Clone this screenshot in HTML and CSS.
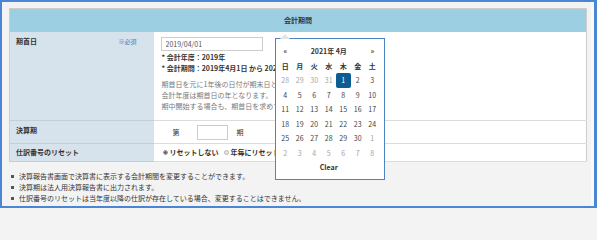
FILE: index.html
```html
<!DOCTYPE html>
<html lang="ja">
<head>
<meta charset="utf-8">
<title>会計期間</title>
<link rel="stylesheet" href="styles.css">
</head>
<body>
<div class="frame">
  <table class="form">
    <thead>
      <tr><th colspan="2" class="head">会計期間</th></tr>
    </thead>
    <tbody>
      <tr class="r1">
        <th class="lab"><div class="labrow"><span>期首日</span><span class="req">※必須</span></div></th>
        <td class="val">
          <input class="date" type="text" value="2019/04/01">
          <div class="info">* 会計年度：2019年</div>
          <div class="info">* 会計期間：2019年4月1日 から 2020年3月31日</div>
          <p class="help">期首日を元に1年後の日付が期末日となります。<br>会計年度は期首日の年となります。<br>期中開始する場合も、期首日を求めて入力してください。</p>
        </td>
      </tr>
      <tr class="r2">
        <th class="lab">決算期</th>
        <td class="val">
          <div class="term"><span>第</span><input class="num" type="text" value=""><span>期</span></div>
        </td>
      </tr>
      <tr class="r3">
        <th class="lab">仕訳番号のリセット</th>
        <td class="val">
          <div class="radios">
            <span class="radio on"></span><span class="rlabel">リセットしない</span>
            <span class="radio"></span><span class="rlabel">年毎にリセットする</span>
          </div>
        </td>
      </tr>
    </tbody>
  </table>
  <ul class="notes">
    <li>決算報告書画面で決算書に表示する会計期間を変更することができます。</li>
    <li>決算期は法人用決算報告書に出力されます。</li>
    <li>仕訳番号のリセットは当年度以降の仕訳が存在している場合、変更することはできません。</li>
  </ul>
</div>

<div class="dp">
  <div class="cal">
    <div class="c b">«</div><div class="title">2021年 4月</div><div class="c b">»</div>
    <div class="c b">日</div><div class="c b">月</div><div class="c b">火</div><div class="c b">水</div><div class="c b">木</div><div class="c b">金</div><div class="c b">土</div>
    <div class="c old">28</div><div class="c old">29</div><div class="c old">30</div><div class="c old">31</div><div class="c active">1</div><div class="c">2</div><div class="c">3</div>
    <div class="c">4</div><div class="c">5</div><div class="c">6</div><div class="c">7</div><div class="c">8</div><div class="c">9</div><div class="c">10</div>
    <div class="c">11</div><div class="c">12</div><div class="c">13</div><div class="c">14</div><div class="c">15</div><div class="c">16</div><div class="c">17</div>
    <div class="c">18</div><div class="c">19</div><div class="c">20</div><div class="c">21</div><div class="c">22</div><div class="c">23</div><div class="c">24</div>
    <div class="c">25</div><div class="c">26</div><div class="c">27</div><div class="c">28</div><div class="c">29</div><div class="c">30</div><div class="c old">1</div>
    <div class="c old">2</div><div class="c old">3</div><div class="c old">4</div><div class="c old">5</div><div class="c old">6</div><div class="c old">7</div><div class="c old">8</div>
    <div class="clear">Clear</div>
  </div>
</div>
</body>
</html>
```

FILE: styles.css
```css
* { box-sizing: border-box; }
html, body { margin: 0; padding: 0; }
body {
  font-family: "Noto Sans CJK JP", "Noto Sans", sans-serif;
  font-size: 7px;
  line-height: 11px;
  color: #333;
  background: #f3f3f3;
  overflow: hidden;
}
.frame {
  width: 597px;
  height: 208px;
  border: solid #4a86d4;
  border-width: 2px 3px 2px 2px;
  background: #f3f3f3;
  box-shadow: inset -3px 0 0 #f9f9f9;
  padding: 6px 7px 0 7px;
}
.form {
  width: 100%;
  border-collapse: collapse;
  border: 1px solid #cdcdcd;
  background: #fff;
}
.head {
  background: #9dcfe3;
  height: 23px;
  padding: 0;
  font-weight: bold;
  text-align: center;
  vertical-align: middle;
}
.lab {
  width: 144px;
  background: #d6e2ec;
  text-align: left;
  vertical-align: top;
  font-weight: bold;
  padding: 4px 17px 3px 6px;
  border-bottom: 1px solid #c3ced8;
}
.labrow { display: flex; justify-content: space-between; align-items: center; }
.req { color: #3a7cc4; font-size: 6px; font-weight: normal; }
.val {
  vertical-align: top;
  padding: 4px 7px 3px;
  border-bottom: 1px solid #dcdcdc;
}
.r1 .val { padding-top: 5px; padding-bottom: 8px; }
.r3 .val, .r3 .lab { padding-top: 3px; }
.date {
  display: block;
  width: 102px;
  height: 14px;
  margin: 0 0 1px 0;
  padding: 0 4px;
  border: 1px solid #cccccc;
  font: 7px "Noto Sans CJK JP", "Noto Sans", sans-serif;
  color: #555;
  background: #fff;
  outline: none;
}
.info { font-weight: bold; padding-left: 1px; }
.help { margin: 5px 0 0; color: #7a7a7a; padding-left: 1px; }
.term { display: flex; align-items: center; padding-left: 12px; height: 15px; }
.num {
  width: 31px;
  height: 15px;
  margin: 0 9px 0 17px;
  border: 1px solid #cccccc;
  background: #fff;
  padding: 0;
  outline: none;
}
.radios { display: flex; align-items: center; height: 11px; padding-left: 2px; }
.radio {
  width: 5px;
  height: 5px;
  border-radius: 50%;
  border: 1px solid #b5b5b5;
  background: #e9e9e9;
}
.radio.on { background: radial-gradient(circle, #666 0 1.2px, #e3e3e3 1.6px); border-color: #999; }
.rlabel { font-weight: bold; margin: 0 5px 0 2px; }
.notes { list-style: none; margin: 9px 0 0; padding: 0; }
.notes li::before {
  content: "";
  display: inline-block;
  width: 3px;
  height: 3px;
  background: #555;
  margin: 0 5px 0 2px;
  vertical-align: middle;
}

.dp {
  position: absolute;
  left: 275px;
  top: 38px;
  width: 110px;
  height: 142px;
  background: #fff;
  border: 1px solid #4d84c6;
  padding: 5px 4px 4px 2px;
}
.dp::before {
  content: "";
  position: absolute;
  left: 4px;
  top: -5px;
  border-left: 5px solid transparent;
  border-right: 5px solid transparent;
  border-bottom: 5px solid #e4e4e4;
}
.cal {
  display: grid;
  grid-template-columns: repeat(7, 14.5px);
  grid-auto-rows: 14.5px;
}
.c {
  text-align: center;
  line-height: 14.5px;
  color: #444;
}
.c.b { font-weight: bold; color: #333; }
.c.old { color: #a5a5a5; }
.c.active { background: #0d5c94; color: #fff; border-radius: 2px; }
.title { grid-column: span 5; text-align: center; font-weight: bold; line-height: 14.5px; }
.clear { grid-column: span 7; text-align: center; font-weight: bold; line-height: 14.5px; }
```
